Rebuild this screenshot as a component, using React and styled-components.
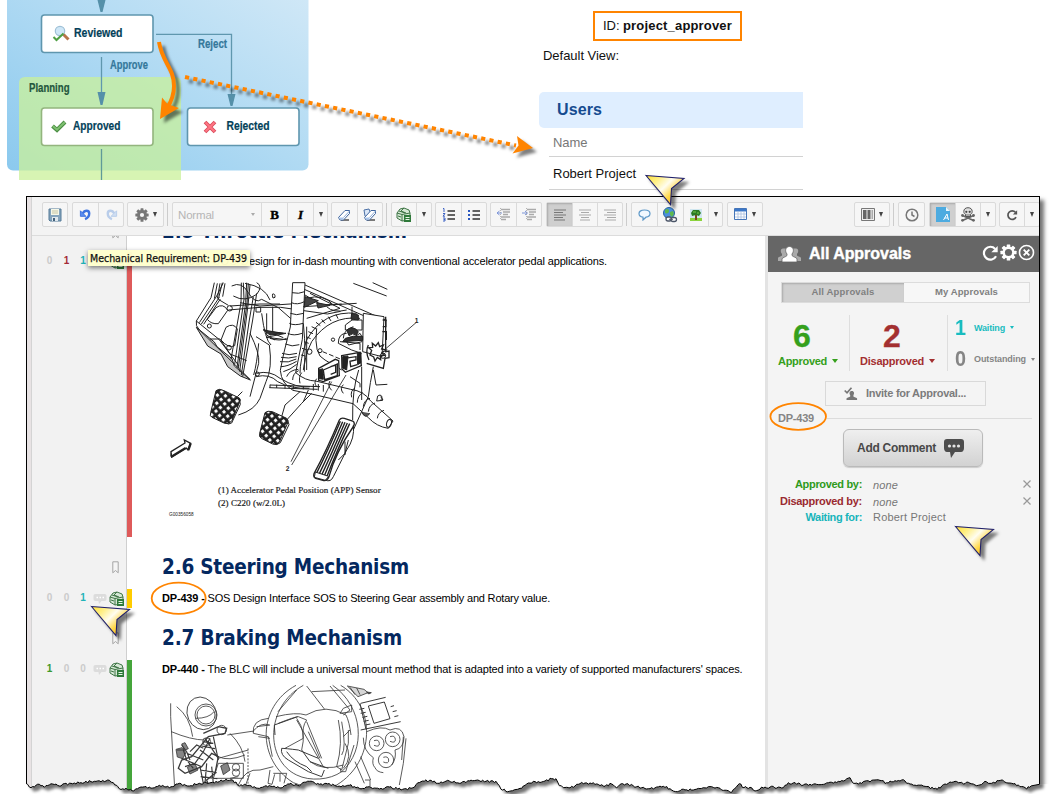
import React, { useLayoutEffect, useRef, useState } from 'react';
import styled, { createGlobalStyle, css } from 'styled-components';

const Global = createGlobalStyle`
  *, *::before, *::after { box-sizing: border-box; }
  html, body { margin: 0; background: #fff; overflow: hidden; }
  body { font-family: "Liberation Sans", Arial, sans-serif; color: #111; }
  svg { display: block; }
`;

const orange = '#ff8400';

/* Spreads a line of text over a given measure by adjusting its tracking. */
const FitSpan = styled.span`
  display: inline-block;
  white-space: pre;
`;
function Fit({ w, children }) {
  const ref = useRef(null);
  const [ls, setLs] = useState(0);
  useLayoutEffect(() => {
    const natural = ref.current.getBoundingClientRect().width;
    const n = ref.current.textContent.length;
    setLs((w - natural) / n);
  }, [w]);
  return <FitSpan ref={ref} style={{ letterSpacing: `${ls}px` }}>{children}</FitSpan>;
}

const Page = styled.div`
  position: relative;
  width: 1049px;
  height: 794px;
  overflow: hidden;
  background: #fff;
`;
const Top = styled.div`
  display: flex;
  height: 196px;
`;
const DiagramSvg = styled.svg`
  flex: 0 0 539px;
`;

/* ---- Users list ---- */
const UserPane = styled.div`
  width: 264px;
  padding-top: 11px;
  font-size: 13px;
`;
const IdBox = styled.div`
  width: 149px;
  height: 30px;
  margin-left: 54px;
  padding-left: 8px;
  border: 2px solid ${orange};
  line-height: 25px;
  color: #111;
`;
const ViewLabel = styled.div`
  padding-left: 4px;
  height: 51px;
  line-height: 29px;
  color: #111;
`;
const UsersTitle = styled.div`
  height: 36px;
  padding-left: 18px;
  border-radius: 5px 0 0 5px;
  background: #dfeeff;
  color: #154b90;
  font-size: 16px;
  font-weight: bold;
  line-height: 35px;
`;
const UserRow = styled.div`
  height: ${(p) => p.$h}px;
  margin-left: 10px;
  padding-left: 4px;
  border-bottom: 1px solid #d2d2d2;
  line-height: ${(p) => p.$lh}px;
  color: ${(p) => (p.$muted ? '#777' : '#111')};
`;

/* ---- Editor window ---- */
const Editor = styled.div`
  display: flex;
  width: 1014px;
  height: 598px;
  margin-left: 26px;
  border: 1px solid #000;
  border-bottom: 0;
  background: #f3f3f3;
  box-shadow: 4px 4px 4px rgba(0, 0, 0, 0.55);
`;
const Edge = styled.div`
  flex: 0 0 5px;
  background: #e8e3e4;
  border-right: 1px solid #d4d4d4;
`;
const Body = styled.div`
  width: 1007px;
  overflow: hidden;
`;
const Toolbar = styled.div`
  display: flex;
  height: 39px;
  padding: 5px 0 0 10px;
  border-bottom: 1px solid #dcdcdc;
  background: #f3f3f3;
`;
const Group = styled.div`
  display: flex;
  flex: none;
  height: 25px;
  margin-right: ${(p) => p.$mr ?? 4}px;
  border: 1px solid #dadada;
  border-radius: 2px;
  background: #f6f6f6;
`;
const Tool = styled.div`
  display: flex;
  align-items: center;
  justify-content: center;
  gap: 4px;
  width: ${(p) => p.$w}px;
  color: #4c4c4c;
  ${(p) => p.$on && css`background: #cfcfcf; box-shadow: inset 1px 1px 2px #aaa;`}
  & + & { border-left: 1px solid #dadada; }
`;
const Select = styled(Tool)`
  justify-content: space-between;
  padding: 0 6px 0 5px;
  font-size: 11.500px;
  color: #b5b5b5;
`;
const Letter = styled.span`
  font-family: "Liberation Serif", serif;
  font-size: 13px;
  font-weight: bold;
  font-style: ${(p) => (p.$italic ? 'italic' : 'normal')};
  color: #000;
  -webkit-text-stroke: 0.4px #000;
`;
const Sep = styled.div`
  flex: none;
  width: 1px;
  height: 23px;
  margin: 1px ${(p) => p.$mr}px 0 0;
  background: #ccc;
`;
const Spacer = styled.div`
  flex: 0 0 ${(p) => p.$w}px;
`;
const Caret = styled.i`
  width: 0;
  height: 0;
  border: ${(p) => p.$s ?? 2.5}px solid transparent;
  border-top: ${(p) => p.$t ?? 5}px solid ${(p) => p.$c ?? '#444'};
  border-bottom: 0;
`;
const Main = styled.div`
  display: flex;
  height: 558px;
`;

/* ---- Document ---- */
const Doc = styled.div`
  flex: 0 0 733px;
  background: #fff;
  overflow: hidden;
`;
const Row = styled.div`
  display: flex;
  height: ${(p) => p.$h}px;
`;
const Gutter = styled.div`
  display: flex;
  flex: 0 0 95px;
  align-items: flex-start;
  justify-content: flex-end;
  padding: ${(p) => p.$pt ?? 0}px ${(p) => p.$pr ?? 2}px 0 0;
  border-right: 1px solid #cfcfcf;
  background: #f2f2f2;
  overflow: hidden;
`;
const Bar = styled.div`
  flex: 0 0 5px;
  background: ${(p) => p.$c ?? '#fff'};
`;
const Content = styled.div`
  padding-left: 30px;
  white-space: nowrap;
  overflow: hidden;
  flex: 1;
`;
const Heading = styled.h2`
  margin: ${(p) => p.$mt}px 0 0;
  font: bold 20.500px/30px "DejaVu Sans Condensed", "DejaVu Sans", sans-serif;
  font-stretch: semi-condensed;
  color: #04285f;
`;
const Line = styled.div`
  height: 18px;
  font-size: 11px;
  line-height: 18px;
  color: #000;
`;
const Count = styled.span`
  flex: 0 0 ${(p) => p.$w ?? 17}px;
  text-align: center;
  font-size: 10px;
  font-weight: bold;
  line-height: 18px;
  color: ${(p) => p.$c ?? '#cbcbcb'};
`;
const Marks = styled.div`
  display: flex;
  height: 18px;
`;
const ScrolledMark = styled.div`
  margin-top: -10px;
`;
const Tip = styled.div`
  position: absolute;
  left: 88px;
  top: 250px;
  width: 162px;
  height: 16px;
  padding-left: 2px;
  background: rgba(255, 255, 204, 0.97);
  box-shadow: 0 2px 5px rgba(0, 0, 0, 0.5);
  font: 10.500px/16px "DejaVu Sans Condensed", "DejaVu Sans", sans-serif;
  font-stretch: semi-condensed;
  -webkit-text-stroke: 0.25px #111;
  color: #111;
`;

/* ---- Approvals panel ---- */
const Divider = styled.div`
  flex: 0 0 3px;
  background: #e3e3e3;
`;
const Panel = styled.div`
  width: 271px;
  background: #f4f4f4;
  color: #7a7a7a;
`;
const PanelHead = styled.div`
  display: flex;
  align-items: center;
  height: 36px;
  padding: 0 4px 0 9px;
  background: #666;
  color: #fff;
  font-size: 16px;
  font-weight: bold;
`;
const PanelTitle = styled.div`
  flex: 1;
  padding-left: 7px;
  -webkit-text-stroke: 0.4px #fff;
`;
const HeadIcons = styled.div`
  display: flex;
  gap: 1px;
  margin-top: -2px;
`;
const Tabs = styled.div`
  display: flex;
  width: 249px;
  height: 21px;
  margin: 10px 0 0 13px;
  border: 1px solid #dcdcdc;
`;
const Tab = styled.div`
  flex: ${(p) => (p.$on ? '0 0 122px' : '1')};
  text-align: center;
  font-size: 9.5px;
  font-weight: bold;
  line-height: 18px;
  color: #808080;
  background: ${(p) => (p.$on ? '#d0d0d0' : '#f7f7f7')};
  box-shadow: ${(p) => (p.$on ? 'inset 1px 1px 2px #aaa' : 'none')};
`;
const Stats = styled.div`
  display: flex;
  height: 56px;
  margin-top: 12px;
`;
const Stat = styled.div`
  width: ${(p) => p.$w}px;
  padding-left: ${(p) => p.$pl}px;
  border-right: 1px solid #dedede;
  color: ${(p) => p.$c};
  font-weight: bold;
`;
const Big = styled.div`
  padding-left: ${(p) => p.$pl}px;
  height: 42px;
  font-size: 32px;
  line-height: 42px;
  -webkit-text-stroke: 0.3px currentColor;
`;
const StatLabel = styled.div`
  display: flex;
  align-items: center;
  gap: 5px;
  margin-top: -5px;
  font-size: 11px;
  line-height: 18px;
`;
const Side = styled.div`
  padding-left: 7px;
`;
const SideRow = styled.div`
  display: flex;
  align-items: center;
  height: ${(p) => p.$h}px;
  color: ${(p) => p.$c};
  font-size: 9px;
  font-weight: bold;
  gap: 5px;
`;
const SideNum = styled.span`
  width: 14px;
  font-size: 22px;
  line-height: 24px;
  transform: scaleX(0.9);
  transform-origin: left;
`;
const Invite = styled.div`
  display: flex;
  align-items: center;
  width: 161px;
  height: 25px;
  margin: 10px 0 0 57px;
  padding-left: 18px;
  gap: 8px;
  border: 1px solid #d9d9d9;
  font-size: 11px;
  font-weight: bold;
  line-height: 29px;
  color: #7c7c7c;
`;
const ItemLine = styled.div`
  display: flex;
  align-items: center;
  height: 23px;
  padding: 1px 7px 0 10px;
  gap: 13px;
  font-size: 11px;
  font-weight: bold;
  color: #858585;
  &::after { content: ""; flex: 1; height: 1px; background: #dcdcdc; }
`;
const AddButton = styled.div`
  display: flex;
  align-items: center;
  width: 140px;
  height: 38px;
  margin-left: 75px;
  padding-left: 13px;
  gap: 8px;
  border: 1px solid #bababa;
  border-radius: 6px;
  background: linear-gradient(#efefef, #d2d2d2);
  box-shadow: 0 1px 1px #ccc;
  font-size: 12px;
  font-weight: bold;
  color: #484848;
`;
const People = styled.div`
  padding-top: 9px;
`;
const Person = styled.div`
  display: flex;
  height: 16.7px;
  font-size: 11px;
  line-height: 17px;
`;
const PersonLabel = styled.div`
  width: 94px;
  text-align: right;
  font-weight: bold;
  color: ${(p) => p.$c};
`;
const PersonValue = styled.div`
  flex: 1;
  padding-left: 11px;
  padding-top: ${(p) => (p.$none ? 1 : 0)}px;
  font-style: ${(p) => (p.$none ? 'italic' : 'normal')};
  color: #777;
`;
const RemoveIcon = styled.svg`
  margin: 4px 8px 0 0;
`;
const Overlay = styled.svg`
  position: absolute;
  left: 0;
  top: 0;
  pointer-events: none;
`;

/* ---- Icons ---- */
const SaveIcon = () => (
  <svg width="14" height="14" viewBox="0 0 14 14"><path d="M1 1h12v12H2l-1-1z" fill="#86a5bd" stroke="#557b98" /><path d="M3 1h8v6H3z" fill="#f5f7e8" /><path d="M4 3h6M4 5h6" stroke="#c7c5a4" /><path d="M4 9h6v4H4z" fill="#dfe8ee" /><path d="M5 10h2v3H5z" fill="#43617a" /></svg>
);
const UndoIcon = ({ faded }) => (
  <svg width="13" height="13" viewBox="0 0 14 14"><g transform={faded ? 'translate(14 0) scale(-1 1)' : undefined} stroke={faded ? '#b9cdea' : '#3c73e0'} fill="none"><path d="M4 6C6 2 11 2 11 6c0 3-2 5-4.500 6" strokeWidth="2.600" /><path d="M1.500 3v6h6z" fill={faded ? '#cfdef2' : '#5a8df0'} strokeWidth="1" /></g></svg>
);
const GearIcon = ({ s = 14, c = '#777', hole = '#f6f6f6', r = 2.4 }) => (
  <svg width={s} height={s} viewBox="-8 -8 16 16"><g fill={c}>{[0, 45, 90, 135].map((a) => <rect key={a} x="-1.700" y="-7.600" width="3.400" height="15.200" rx=".6" transform={`rotate(${a})`} />)}<circle r="5.600" /></g><circle r={r} fill={hole} /></svg>
);
const EraserIcon = ({ all }) => (
  <svg width="15" height="14" viewBox="0 0 15 14"><path d="M4 12h8" stroke="#333" strokeWidth="1.300" />{all && <path d="M1 2l5-1 2 5-4 4-2-2z" fill="#dbe7f7" stroke="#4a6fa5" />}<path d="M1.500 9.500L8 2.500h4.500v3L6.500 12H3z" fill="#fff" stroke="#40669f" /><path d="M2 9.500h4.500v2H3z" fill="#a9c5ec" /><path d="M6.500 9.500l6-6.500" stroke="#8eacd6" /></svg>
);
const StampShape = () => (
  <>
    <path d="M1 6L4 2l4-1 5 2 1 3v7l-8 1-5-3z" fill="#d5e8d5" stroke="#3f7546" />
    <path d="M1 6l5 1.500L14 6M6 7.500V14M3 4l6 2M8 1L5 4l5 2M2 9l3 1" stroke="#3f7546" fill="none" />
    <path d="M8 8h7v7H8z" fill="#2f7a3a" />
    <path d="M9.500 10.500h4M9.500 12.500h4" stroke="#e8f6e8" />
  </>
);
const StampIcon = () => <svg width="16" height="16" viewBox="0 0 16 16"><StampShape /></svg>;
const ListIcon = ({ numbered }) => (
  <svg width="14" height="14" viewBox="0 0 14 14"><path d="M5.500 3H13M5.500 7H13M5.500 11H13" stroke="#333" strokeWidth="1.300" />{numbered ? <path d="M1 .500h1V4M1 5.500h2L1 8.200h2M1 10h2v3H1M3 11.500H1.500" stroke="#3c62c4" fill="none" /> : <path d="M1 2h2v2H1zM1 6h2v2H1zM1 10h2v2H1z" fill="#2a57c0" />}</svg>
);
const IndentIcon = ({ out }) => (
  <svg width="15" height="13" viewBox="0 0 15 13"><path d="M5 1.500h9M7 4h7M7 6.500h5M5 9h9M5 11.500h5" stroke="#aaa" strokeWidth="1.300" /><path d={out ? 'M6 5H1m2.500-2L1 5l2.500 2' : 'M0 5h5M3 3l2.500 2L3 7'} stroke="#7d95d9" fill="none" /><path d="M4.500 0v12" stroke="#999" strokeDasharray="1 1" strokeWidth=".7" /></svg>
);
const AlignIcon = ({ d, c = '#aaa' }) => (
  <svg width="14" height="12" viewBox="0 0 14 12"><path d={d} stroke={c} strokeWidth="1.200" /></svg>
);
const BubbleIcon = () => (
  <svg width="13" height="12" viewBox="0 0 13 12"><path d="M6.500 1c3 0 5.500 1.300 5.500 3.600S10 8 8 8.200L5 11V8.200C3 8 1 7 1 4.600S3.500 1 6.500 1z" fill="#f0f8ff" stroke="#5d98c8" strokeWidth="1.200" /></svg>
);
const GlobeIcon = () => (
  <svg width="15" height="16" viewBox="0 0 15 16"><circle cx="6" cy="6" r="5.500" fill="#4b8fdd" stroke="#27649f" /><path d="M2 3c3-2 4-1 4 1S4 7 2 6zM7 5l3-1 1 3-2 3-2-2z" fill="#5eb84d" /><g fill="#fff" stroke="#4b5568" strokeWidth="1.300"><rect x="3" y="10" width="5.500" height="4" rx="2" /><rect x="8" y="10.500" width="5.500" height="4" rx="2" /></g><path d="M6 12.300h4" stroke="#4b5568" /></svg>
);
const TreeIcon = () => (
  <svg width="12" height="12" viewBox="0 0 12 12"><path d="M0 0h12v12H0z" fill="#cfe6ef" /><path d="M0 9h12v3H0z" fill="#8bd33d" /><path d="M5 5h2v6H5z" fill="#7a4a1d" /><path d="M1 4l2-3h6l2 3-2 3-3-1-4 1z" fill="#2c7a24" /><path d="M3 3h3M7 4h2" stroke="#76c94b" /></svg>
);
const TableIcon = () => (
  <svg width="14" height="13" viewBox="0 0 14 13"><path d="M.5.500h12v11H.500z" fill="#fff" stroke="#4575b8" /><path d="M1 1h11v2.500H1z" fill="#3c78c9" /><path d="M4 3v8M7 3v8M10 3v8M1 6h11M1 9h11" stroke="#a7bede" strokeWidth=".8" /></svg>
);
const ColumnsIcon = () => (
  <svg width="14" height="13" viewBox="0 0 14 13"><path d="M.5.500h13v12H.500z" fill="#eee" stroke="#777" /><path d="M2 2h3.500v9H2zM6.500 2h3v9h-3z" fill="#666" /><path d="M10.500 2H12v9h-1.500z" fill="#aaa" /></svg>
);
const ClockIcon = () => (
  <svg width="14" height="14" viewBox="0 0 14 14" fill="none" stroke="#777" strokeWidth="1.500"><circle cx="7" cy="7" r="5.800" /><path d="M7 3.500V7l2.500 1.500" /></svg>
);
const PageAIcon = () => (
  <svg width="14" height="15" viewBox="0 0 14 15"><path d="M0 0h10l4 4v11H0z" fill="#4dabe0" /><path d="M10 0l4 4h-4z" fill="#e8f5fc" /><path d="M7.500 13L11 7l1.500 6M8.500 11h3.500" stroke="#fff" fill="none" /></svg>
);
const SkullIcon = () => (
  <svg width="14" height="15" viewBox="0 0 14 15"><path d="M1.500 8.500l11 5M12.500 8.500l-11 5" stroke="#666" strokeWidth="1.700" /><g fill="#666"><circle cx="1.500" cy="8.500" r="1.400" /><circle cx="12.500" cy="8.500" r="1.400" /><circle cx="1.500" cy="13.300" r="1.400" /><circle cx="12.500" cy="13.300" r="1.400" /></g><path d="M7 .7c2.600 0 4.200 1.500 4.200 3.800 0 1.700-.7 2.300-1.700 2.800V9.500h-5V7.300c-1-.5-1.700-1.100-1.700-2.800C2.800 2.200 4.400.7 7 .7z" fill="#ddd" stroke="#555" /><circle cx="5.300" cy="4.800" r="1.100" fill="#444" /><circle cx="8.700" cy="4.800" r="1.100" fill="#444" /><path d="M6 7v2M8 7v2" stroke="#555" strokeWidth=".8" /></svg>
);
const ReloadIcon = ({ s = 12, c = '#555', w = 2 }) => (
  <svg width={s} height={s} viewBox="0 0 14 14"><path d="M11 3.800A5 5 0 1 0 11.700 9.500" fill="none" stroke={c} strokeWidth={w} /><path d="M13 1.500v5H8z" fill={c} /></svg>
);
const CloseIcon = () => (
  <svg width="17" height="17" viewBox="0 0 17 17" fill="none" stroke="#fff" strokeWidth="1.600"><circle cx="8.500" cy="8.500" r="7" /><path d="M5.700 5.700l5.600 5.600M11.300 5.700l-5.600 5.600" strokeWidth="1.900" /></svg>
);
const GroupIcon = () => (
  <svg width="25" height="17" viewBox="0 0 25 17"><path d="M1 15v-3c0-1 3-1.500 4-2.500V8C3 6 3.500 2.500 6 2.500h13c2.500 0 3 3.500 1 5.500v1.500c1 1 4 1.500 4 2.500v3z" fill="#aaa" /><path d="M5 16v-3c0-1.500 4-2 5-3.500V8C7.500 5 8.500 .500 12.500.500S17.500 5 15 8v1.500c1 1.500 5 2 5 3.500v3z" fill="#fff" stroke="#666" strokeWidth=".8" /></svg>
);
const InviteIcon = () => (
  <svg width="14" height="14" viewBox="0 0 14 14"><path d="M.7 3.500l2.300 2.300L7.500.7" fill="none" stroke="#777" strokeWidth="1.700" /><path d="M2.500 13v-1.500c0-1 3-1 3.700-2V8.300C5 6.500 5.300 4 7.800 4s2.800 2.500 1.600 4.300v1.200c.7 1 3.700 1 3.700 2V13z" fill="#777" /></svg>
);
const CommentIcon = ({ w = 20, c = '#4d4d4d', dot = '#e4e4e4' }) => (
  <svg width={w} height={w} viewBox="0 0 20 20"><path d="M3 1h14c2 0 3 1 3 3v6c0 2-1 4-3 4h-6l-4 6-1-6H3c-2 0-3-2-3-4V4c0-2 1-3 3-3z" fill={c} /><g fill={dot}><circle cx="5.500" cy="8" r="1.600" /><circle cx="10" cy="8" r="1.600" /><circle cx="14.500" cy="8" r="1.600" /></g></svg>
);
const SpeechIcon = () => (
  <svg width="18" height="18" viewBox="0 0 18 18"><g transform="translate(2.500 5)"><path d="M2 0h9c1.500 0 2 .7 2 2v3c0 1.300-.7 2-2 2H8l-2.500 3L5 7H2C.7 7 0 6.300 0 5V2C0 .7.700 0 2 0z" fill="#dcdcdc" /><path d="M3 3.500h1.500M6 3.500h1.500M9 3.500h1.500" stroke="#fff" strokeWidth="1.500" /></g></svg>
);
const Bookmark = () => (
  <svg width="7" height="13" viewBox="0 0 7 13"><path d="M.8.800h5.400v11L3.500 9.500.8 11.800z" fill="#f5f5f5" stroke="#a6a6a6" /></svg>
);

function Counters({ values, colors = [] }) {
  return (
    <Gutter $pr={1}>
      {values.map((v, i) => <Count key={i} $c={colors[i]} $w={i === 2 ? 16 : 17}>{v}</Count>)}
      <Marks>
        <SpeechIcon />
        <svg width="16" height="18" viewBox="0 -2 16 18"><StampShape /></svg>
      </Marks>
    </Gutter>
  );
}

/* ---- Workflow diagram ---- */
const NodeText = ({ x, y, w, c = '#033f59', children }) => (
  <text x={x} y={y} textLength={w} lengthAdjust="spacingAndGlyphs" fontSize="12" fontWeight="bold" fill={c} stroke={c} strokeWidth=".2">{children}</text>
);
function Workflow() {
  return (
    <DiagramSvg width="539" height="196" fontFamily="Liberation Sans, Arial, sans-serif">
      <defs>
        <linearGradient id="sky" x1="0" y1="1" x2="1" y2="0"><stop offset="0" stopColor="#8bc9ee" /><stop offset=".5" stopColor="#b0daf3" /><stop offset="1" stopColor="#d3e9f7" /></linearGradient>
      </defs>
      <rect x="7" y="-20" width="301.500" height="190.500" rx="6" fill="url(#sky)" />
      <path d="M19 180V83q0-6 6-6h150q6 0 6 6v97z" fill="#c9f09a" fillOpacity=".75" />
      <g stroke="#5f97ae" fill="none" strokeWidth="1.300">
        <path d="M101.500 0v4M101.500 57v36M156 34.300h75.500V96" />
        <path d="M101.500 149v31" stroke="#5f9a98" />
      </g>
      <path d="M97.500 0h8l-3 12h-2zM97.500 92h8l-3 13h-2zM227.500 94h8l-3 12h-2z" fill="#5590a9" />
      <rect x="41.500" y="15" width="111.500" height="37.500" rx="3" fill="#fff" stroke="#5f96ae" strokeWidth="1.600" />
      <rect x="41.500" y="108" width="111.500" height="37.500" rx="3" fill="#fff" stroke="#93b57e" strokeWidth="1.600" />
      <rect x="187.500" y="108" width="111.500" height="37.500" rx="3" fill="#fff" stroke="#5f96ae" strokeWidth="1.600" />
      <circle cx="60" cy="31" r="4.700" fill="#cfe7f7" stroke="#9fc0d6" strokeWidth="1.200" />
      <path d="M63.500 34.500l5 5" stroke="#b87449" strokeWidth="3" />
      <path d="M53.500 37l3 3 7-6.500" stroke="#4f9f43" strokeWidth="2" fill="none" />
      <path d="M52.500 126l4.500 4 8-8" stroke="#4b8e43" strokeWidth="4" fill="none" />
      <path d="M52.800 126l4.200 3.700 7.700-7.500" stroke="#7fc071" strokeWidth="2" fill="none" />
      <path d="M205 122l10 10M215 122l-10 10" stroke="#d94c5c" strokeWidth="3.800" />
      <path d="M205.500 122.500l9 9M214.500 122.500l-9 9" stroke="#ff7684" strokeWidth="1.800" />
      <NodeText x={74} y={37} w={48.500}>Reviewed</NodeText>
      <NodeText x={73} y={130} w={47.500}>Approved</NodeText>
      <NodeText x={226.500} y={130} w={43}>Rejected</NodeText>
      <NodeText x={110} y={69} w={38} c="#34779a">Approve</NodeText>
      <NodeText x={198} y={48} w={29} c="#34779a">Reject</NodeText>
      <NodeText x={29} y={92} w={40.500} c="#23563d">Planning</NodeText>
    </DiagramSvg>
  );
}

/* ---- Technical drawings ---- */
function PedalDrawing() {
  return (
    <svg width="268" height="260" viewBox="6 0 804 780" fill="none" stroke="#222" strokeWidth="3">
      <defs>
        <pattern id="tread" width="17" height="17" patternUnits="userSpaceOnUse" patternTransform="rotate(50)"><rect width="17" height="17" fill="#1a1a1a" /><rect x="3" y="3" width="9" height="9" fill="#fff" stroke="none" /></pattern>
      </defs>
      <path d="M163 38l-10 45-44 70q-4 14 10 28l152 148M109 153l68 55 60 80M187 38l-12 50 30 18M131 163l50-76M118 158l52-80 20-40M124 162l54-80 M150 207l30 0 30 45 50 20M142 148l26-35q22-15 35 8l-28 40q-22 2-33-13zM183 210l15-38q22-15 34 5l-8 50q-18 10-41-17z" />
      <path d="M250 38l2 50-28 195M260 38l-3 60-26 195M265 40l-4 60-26 195M270 45l-6 60-25 200M280 80l-12 70-24 165M290 70l-12 80-30 170M244 38l-1 60-30 170M172 40l-9 46M180 40l-8 46M195 40l-7 40" />
      <path d="M109 172l54 44 8 14 45 36 7 22 48 42-30-12-38-28-20-38-40-24z" fill="#444" fillOpacity=".3" />
      <circle cx="148" cy="168" r="6" /><circle cx="207" cy="233" r="7" /><circle cx="209" cy="115" r="8" />
      <path d="M215 48q30-15 50 20t40 20l50 25 40 35M255 40q60 10 75 50M220 78q35 20 70-5 20-25 0-35M288 112h14v14h-14zM205 120l95-8 62 0 140 20 40-8M240 98l60 10 150-10M210 108l90-6 60 0" />
      <path d="M288 200l40 25q10 70-10 110l-18 50q-15 35-65 50M305 130q10 80 28 95M270 190q30 60 26 90l-26 100M296 220q-5 60-15 95" />
      <path d="M320 130v65l25 15M338 110v80M310 178l60 25M318 185l60 5-60 12 70 8M330 205q30 10 50 0" />
      <path d="M310 180l60 10-40 5z" fill="#333" />
      <path d="M398 38h37l-8 170-20 100q30 25 60 25l105 25q40 5 60 35l67 60-14 22q-35-5-60-32l-46-42-120-28-60-12q-35-20-38-60l10-50 20-80z" fill="#fff" />
      <path d="M396 68q20 5 38-3M394 98q18 8 39-3M391 130q18 8 40 0M388 160q15 8 41 0M383 190q18 9 43 0M376 222q20 10 42 2M366 250q20 8 45 0M363 262q22 5 47-2M360 275q25 5 49-8M362 290q20 0 48-16M370 305q20-5 40-22M380 320q8-20 35-22M398 330q0-20 18-28M420 340q-5-20 5-32M470 350q-10-12 0-24M515 361q-14-14-5-28M550 370q-12-14 0-26M575 382q-5-20 10-28M592 398q0-20 16-30M610 410q2-20 20-25M625 425q2-20 20-26M652 445q2-18 20-24" />
      <ellipse cx="687" cy="460" rx="7" ry="12" transform="rotate(15 687 460)" />
      <path d="M435 45l245 107M433 58l180 80M435 75l50 30 60-3M440 85q50-15 80 20M430 110l160-10M450 70l90 45-100 30M580 40l100 38M638 38l44 20M590 130q-100-10-150 80-20 60-20 100M600 145q-90-10-145 70-25 50-22 90M470 175q-10 80 25 95l50 30M430 160q10 100 0 140M440 170v130M500 110q20 20 60 10" />
      <path d="M435 80l40 12-42 20zM470 98l40 8-36 8z" fill="#444" />
      <path d="M432 215l14 5M438 200l14 6M445 185l14 6M455 170l14 7M468 157l13 10M485 148l10 12M505 140l8 13M528 133l6 13M426 235l13 4M423 255l13 3" />
      <path d="M610 130l62 10-6 120-58-15zM576 110v40h30v30h-50v-15l20-15M560 190q-25 0-25 30l40 20 30 10M580 170q-30 10-30 35M560 215l40-25q10 10 6 25l-40 10zM540 215l60 5v20" fill="#fff" />
      <path d="M560 180q20-15 35 5l-6 10q-12-8-22 2zM575 130l20 5v15l-22-3zM556 205q25-10 52-6v12l-60 4z" fill="#333" />
      <path d="M630 255l5-14-9-8 12-1-1-12 10 8 8-10 4 12 11-5-5 12 13 3-12 7 8 9-13 1 1 12-10-7-7 11-4-12z" strokeWidth="4" />
      <path d="M625 225q-10 20 2 45M620 280l50 15 5-30 12-2v-20l-10 2V140M668 150h10v20h-10M667 185h12v25" strokeWidth="4" />
      <circle cx="669" cy="257" r="8" /><circle cx="519" cy="209" r="5" /><circle cx="480" cy="242" r="6" /><circle cx="448" cy="245" r="8" />
      <path d="M488 245l60 25" strokeDasharray="14 7" />
      <path d="M545 257l55-10 4 40-48 20-10-10zM553 265l35-5v10l-18 4 2 16 20-6M476 295l50-27 10 4 2 45-48 18-14-4zM490 300l42-18v35l-38 12zM512 290l15-5v22l-15 6M478 310l14 5" fill="#fff" strokeWidth="4" />
      <path d="M548 260l16-2-4 42-12-6zM476 300l12-4 2 32-12-2zM592 250l11-2v30l-10 6z" fill="#222" />
      <path d="M768 158L675 238M515 335L393 575M558 315L395 585" strokeWidth="2.500" />
      <path d="M596 300q-20 60-18 150M640 290q-10 50-15 90l-45 100M605 290v100M640 300l8 45 34-2M570 320l30 20 0 12" />
      <path d="M290 310q40-10 70 15 50 30 90 25M288 320q40-10 65 15 40 22 95 20M330 345l150 5M328 353l145 5M330 344v10M350 344v10M375 346v10M400 348v10M430 348v10M460 342v20M475 342v20M490 345v20" />
      <circle cx="292" cy="312" r="6" />
      <path d="M420 365l-45 40-10 35M455 370l-30 30-45 50M445 360l-15 35M232 380l15-15M215 405l15-22" />
      <path d="M168 362q10-8 24 0l46 22q6 5 0 14l-22 54q-8 12-22 8l-38-18q-8-4-4-14z" fill="url(#tread)" />
      <path d="M238 385l3 18-26 56q-10 6-18 0" />
      <path d="M315 428q7-7 22-3l43 20q6 6 3 14l-25 58q-8 9-20 5l-34-17q-8-5-5-15z" fill="url(#tread)" />
      <path d="M382 448l5 16-26 54q-10 10-22 3" />
      <path d="M538 450q5-8 15-5l25 8q8 5 3 15-55 80-74 152-7 15-18 11l-22-6q-8-4-5-14 38-70 76-161z" fill="#fff" strokeWidth="4" />
      <path d="M541 454q-38 90-72 157M548 455q-38 90-71 158M555 457q-38 90-70 158M562 459q-40 90-69 158M569 461q-42 90-68 158" strokeWidth="4.200" />
      <path d="M466 606l40 13-10 12-33-9z" fill="#fff" />
      <path d="M580 465q5 40-20 75l-40 80q-8 18-24 10M565 510l-10 40-20 20M555 515v40" />
      <path d="M605 425q10 25 25 5" fill="#555" />
      <path d="M650 393l3-15q8-6 12 0l2 13zM662 380l7 10h-8M338 72q8-2 7 10l-6 2q-3-7-1-12z" />
      <path d="M33 545l42-26-2-9 19 10-8 20-5-6-44 27zM33 545v14" strokeWidth="4" fill="#fff" />
      <path d="M33 561l44-27M92 520l-7 20" strokeWidth="7" />
      <g fill="#222" stroke="none" fontFamily="Liberation Serif, serif">
        <text x="174" y="670" fontSize="27" textLength="488" stroke="#222" strokeWidth=".6">(1) Accelerator Pedal Position (APP) Sensor</text>
        <text x="174" y="707" fontSize="27" textLength="201" stroke="#222" strokeWidth=".6">(2) C220 (w/2.0L)</text>
        <text x="764" y="158" fontSize="20" fontFamily="Liberation Sans" fontWeight="bold">1</text>
        <text x="377" y="602" fontSize="20" fontFamily="Liberation Sans" fontWeight="bold">2</text>
        <text x="27" y="738" fontSize="14" textLength="74" fontFamily="Liberation Sans">G00356058</text>
      </g>
    </svg>
  );
}

function WheelDrawing() {
  return (
    <svg width="268" height="116" viewBox="36 24 804 348" fill="none" stroke="#3a3a3a" strokeWidth="2.500">
      <path d="M62 100v40l12 215M80 110q40 30 48 90M64 185q60 25 100 25M232 195l80-12" />
      <ellipse cx="155" cy="130" rx="43" ry="50" transform="rotate(-25 155 130)" />
      <circle cx="168" cy="135" r="33" /><circle cx="168" cy="135" r="27" /><path d="M137 145q40 0 55-20" />
      <path d="M160 190l45-20 25 5-5 15-50 10-25 30-25 30-30 10-10 25 20 15 50-20 30-40 20 10-10 50-25 20 10 30" strokeWidth="4" />
      <path d="M80 240l20 0 10 30 20 25M95 225l15 20 10 25M105 290l30-10 25-35 20-40M150 240l40 30M165 205l40 60M190 200l15 70M150 290l10 50M170 280l-5 60M185 290l5 50M95 265l60 25M110 250l50 20M120 245l20-20 20 10M150 300l50 8M152 320l50 6M160 215l30 5M155 228l40 8" strokeWidth="3.500" />
      <path d="M78 238l18-5 12 15-10 18-16-5zM95 222l10-4 10 18-12 5zM112 292l22-12 10 20-24 12zM212 288l20-10 8 22-20 14z" fill="#333" fillOpacity=".6" />
      <circle cx="215" cy="180" r="14" /><circle cx="258" cy="292" r="11" /><circle cx="258" cy="308" r="11" /><circle cx="170" cy="215" r="12" />
      <path d="M205 280h75v45h-90zM240 325l25-5M205 265l90-25" /><path d="M294 235v115" strokeDasharray="6 4" /><path d="M240 190q40 40 45 85M205 260q30 15 80-5" />
      <path d="M310 190q-5-40 45-45M308 185q25-30 50-20M310 190l45 10 12 60M325 200l35 5M320 170l40-5M265 345q20-50 65-45l40-10M285 350l15-40M360 300l-6 40 12 3 8-30M370 310h40l-8 30M390 310v25" />
      <path d="M378 140q60-15 90-5 60-35 120 0 10 20 15 60M385 160q50-20 60-20l25 10q-15 20-10 55l-55 30M440 145q30 40 15 95" />
      <path d="M375 195l-2-30 70-25M395 235q10 0 50 5l60 25M395 235q-5 20 20 35l60 35 40 15 8-20M410 245q20 30 60 45l15 15M455 240l25 35 55 20" strokeWidth="3" />
      <path d="M440 60l-56 65M470 48l54 70M540 48l60 72-20 15M485 65l100-5" />
      <path d="M440 150l80 140M470 155l45 110M475 185l35 80M480 275q40 30 100 10M565 150q15 70-5 140l15 10 20-80 0-40M575 155q15 80 0 100M585 220q25 40-5 75M580 200l20-20M572 295v10h15l25-80" />
      <path d="M570 130l35-5v-20l-25 10z" />
      <path d="M438 46C320 110 320 270 430 338M425 52M572 46C680 110 675 275 560 345M430 338C470 355 530 355 560 345M460 46C345 110 345 270 440 315C480 335 540 330 575 305C650 240 640 110 548 46" />
      <path d="M592 48l50 10 12 10-30 12zM600 52l15 22M620 54l10 20" fill="#777" fillOpacity=".3" />
      <path d="M650 66l14 2-8 4z" fill="#333" />
      <path d="M632 100l75-18M655 108l48-12 17 50-48 14zM628 118l15-3M632 130l15-3M637 142l15-3M641 154l15-3M646 165l15-3M722 110l10-3M728 125l12-3M733 140l12-3M632 180l120-25M630 100l18 78" strokeWidth="3" />
      <path d="M650 185q45-20 70-5 35-15 42 20 0 35-27 40 5 25-10 45M700 308q-20-2-25-15-10-10-5-30-30-20-30-60" />
      <circle cx="680" cy="220" r="22" /><circle cx="728" cy="208" r="22" /><circle cx="708" cy="270" r="23" />
      <path d="M672 212q15-5 16 8t-16 6M720 200q15-5 16 8t-16 6M700 262q15-5 16 8t-16 6" />
      <path d="M615 275l28 65M632 260l30 70M645 330h15v20M768 205l-8 75-12 65M760 200l-5 70" />
    </svg>
  );
}

/* ---- Torn lower edge ---- */
const tearLeft = [0,130,15,143,40,133,55,142,80,132,100,138,130,130,165,128,205,124,250,121,262,128,280,146,300,145,318,152,345,141,380,144,400,136,430,143,455,132,490,138,520,130,560,127,600,118,620,120,640,138,660,135,690,144,720,137,760,143,790,132,815,136,850,124,880,133,900,130,930,138,970,136,1000,145,1030,140,1060,147,1090,141,1130,148,1155,145,1185,125,1215,121,1240,130,1270,123,1300,130,1340,122,1380,124,1410,124,1425,148,1450,154,1475,148];
const tearRight = [0,145,20,132,40,124,65,126,95,116,108,116,118,137,130,143,165,138,180,131,210,129,250,138,275,132,290,143,308,131,350,140,390,146,430,139,450,146,472,155,485,148,520,150,575,140,600,145,635,157,658,131,672,143,690,142,705,153,725,141,790,143,805,128,850,135,900,134,960,125,990,113,1000,130,1020,128,1065,120,1100,128,1145,120,1170,132,1210,138,1252,148,1265,138,1300,126,1350,130,1375,136,1395,124,1415,130,1442,121,1475,130,1500,140,1520,147,1538,133];
const toPoints = (a, x0) => a.reduce((out, v, i) => (i % 2 ? out : [...out, [x0 + v / 3, 740 + a[i + 1] / 3]]), []);
const tear = [...toPoints(tearLeft, 26), ...toPoints(tearRight, 520)];
const noise = (n) => {
  const v = Math.sin(n * 127.1) * 43758.5453;
  return v - Math.floor(v) - 0.5;
};
const rough = [];
for (let i = 0; i < tear.length - 1; i += 1) {
  const [ax, ay] = tear[i];
  const [bx, by] = tear[i + 1];
  const n = Math.max(1, Math.round((bx - ax) / 1.7));
  for (let k = 0; k < n; k += 1) {
    const t = k / n;
    const j = k === 0 ? 0 : noise(i * 31 + k) * 2.4;
    rough.push(`${(ax + (bx - ax) * t).toFixed(1)},${(ay + (by - ay) * t + j).toFixed(1)}`);
  }
}
rough.push('1039.5,784.3');
const tearLine = rough.join(' L');

const Cursor = ({ x, y }) => (
  <path transform={`translate(${x} ${y})`} d="M0 0l38 3-12.500 10L24.500 29z" fill="url(#gold)" stroke="#20206a" strokeWidth="1.100" filter="url(#drop)" />
);

function Annotations() {
  return (
    <Overlay width="1049" height="794">
      <defs>
        <linearGradient id="gold" x1="0" y1="0" x2=".9" y2=".7"><stop offset="0" stopColor="#ffe030" /><stop offset=".3" stopColor="#fff08a" /><stop offset=".55" stopColor="#fffdf0" /><stop offset=".8" stopColor="#ffd84a" /><stop offset="1" stopColor="#ffc020" /></linearGradient>
        <filter id="drop" x="-30%" y="-30%" width="180%" height="180%" colorInterpolationFilters="sRGB"><feDropShadow dx="4" dy="4" stdDeviation="1.800" floodColor="#000" floodOpacity=".5" /></filter>
        <filter id="soft"><feGaussianBlur stdDeviation="1.800" /></filter>
        <clipPath id="below"><path d={`M0,784 L26,784 L${tearLine} L1049,784 L1049,794 L0,794z`} /></clipPath>
      </defs>
      <g clipPath="url(#below)">
        <rect y="770" width="1049" height="24" fill="#fff" />
        <path transform="translate(4 4)" d={`M26,700 L${tearLine} L1039.500,700z`} fill="#000" fillOpacity=".55" filter="url(#soft)" />
      </g>
      <path d={`M${tearLine}`} fill="none" stroke="#000" strokeWidth="1" />
      <g filter="url(#drop)">
        <path d="M159 42C162 62 174 68 174 86C174 96 171 102 167 108" fill="none" stroke={orange} strokeWidth="4" />
        <path d="M160 119l2-21.500 5.500 6.500 11.500 4z" fill={orange} />
        <path d="M185 77L516 145.500" stroke={orange} strokeWidth="4" strokeDasharray="4.200 4.200" />
        <path d="M533 148L517 136l1.500 9.500-6 8z" fill={orange} />
      </g>
      <g fill="none" stroke={orange} strokeWidth="1.800">
        <ellipse cx="178.700" cy="598.200" rx="27" ry="15.600" />
        <ellipse cx="798.200" cy="416.500" rx="27.800" ry="13.300" />
      </g>
      <Cursor x={646} y={175.500} />
      <Cursor x={955.500} y={526.500} />
      <Cursor x={91.500} y={606.500} />
    </Overlay>
  );
}

const Remove = () => (
  <RemoveIcon width="8" height="8" viewBox="0 0 8 8"><path d="M.5.500l7 7M7.500.500l-7 7" stroke="#999" strokeWidth="1.200" /></RemoveIcon>
);

export default function App() {
  return (
    <Page>
      <Global />
      <Top>
        <Workflow />
        <UserPane>
          <IdBox><Fit w={20}>ID: </Fit><b><Fit w={109}>project_approver</Fit></b></IdBox>
          <ViewLabel><Fit w={76}>Default View:</Fit></ViewLabel>
          <UsersTitle><Fit w={45}>Users</Fit></UsersTitle>
          <UserRow $h={29} $lh={29} $muted><Fit w={34.5}>Name</Fit></UserRow>
          <UserRow $h={33} $lh={34}><Fit w={83}>Robert Project</Fit></UserRow>
        </UserPane>
      </Top>
      <Editor>
        <Edge />
        <Body>
          <Toolbar>
            <Group><Tool $w={24}><SaveIcon /></Tool></Group>
            <Group $mr={3}><Tool $w={25}><UndoIcon /></Tool><Tool $w={25}><UndoIcon faded /></Tool></Group>
            <Group $mr={3}><Tool $w={35}><GearIcon /><Caret /></Tool></Group>
            <Sep $mr={4} />
            <Group $mr={3}><Select $w={88}><Fit w={36}>Normal</Fit><Caret $s={2} $t={3} $c="#aaa" /></Select><Tool $w={26}><Letter>B</Letter></Tool><Tool $w={26}><Letter $italic>I</Letter></Tool><Tool $w={14}><Caret /></Tool></Group>
            <Group $mr={3}><Tool $w={25}><EraserIcon /></Tool><Tool $w={25}><EraserIcon all /></Tool></Group>
            <Sep $mr={4} />
            <Group $mr={3}><Tool $w={24}><StampIcon /></Tool><Tool $w={15}><Caret /></Tool></Group>
            <Group $mr={3}><Tool $w={25}><ListIcon numbered /></Tool><Tool $w={25}><ListIcon /></Tool></Group>
            <Group $mr={4}><Tool $w={25}><IndentIcon out /></Tool><Tool $w={25}><IndentIcon /></Tool></Group>
            <Group $mr={3}>
              <Tool $w={25} $on><AlignIcon c="#777" d="M1 1h12M1 3.500h9M1 6h12M1 8.500h9M1 11h11" /></Tool>
              <Tool $w={25}><AlignIcon d="M1 1h12M3 3.500h8M1 6h12M3 8.500h8M2 11h10" /></Tool>
              <Tool $w={25}><AlignIcon d="M1 1h12M4 3.500h9M1 6h12M4 8.500h9M2 11h11" /></Tool>
            </Group>
            <Sep $mr={4} />
            <Group><Tool $w={25}><BubbleIcon /></Tool><Tool $w={26}><GlobeIcon /></Tool><Tool $w={25}><TreeIcon /></Tool><Tool $w={14}><Caret /></Tool></Group>
            <Group $mr={0}><Tool $w={34}><TableIcon /><Caret /></Tool></Group>
            <Spacer $w={91} />
            <Group $mr={3}><Tool $w={34}><ColumnsIcon /><Caret /></Tool></Group>
            <Sep $mr={4} />
            <Group $mr={4}><Tool $w={25}><ClockIcon /></Tool></Group>
            <Group $mr={3}><Tool $w={25} $on><PageAIcon /></Tool><Tool $w={25}><SkullIcon /></Tool><Tool $w={15}><Caret /></Tool></Group>
            <Group><Tool $w={24}><ReloadIcon /></Tool><Tool $w={15}><Caret /></Tool></Group>
          </Toolbar>
          <Main>
            <Doc>
              <Row $h={16}><Gutter $pr={7}><ScrolledMark><Bookmark /></ScrolledMark></Gutter><Bar /><Content><Heading $mt={-20}><Fit w={245}>2.5 Throttle Mechanism</Fit></Heading></Content></Row>
              <Row $h={285}>
                <Counters values={[0, 1, 1]} colors={[undefined, '#a32a36', '#1fb3b8']} />
                <Bar $c="#de5a5a" />
                <Content>
                  <Line><Fit w={87}><b>DP-438 - </b>SOS D</Fit><Fit w={358}>esign for in-dash mounting with conventional accelerator pedal applications.</Fit></Line>
                  <PedalDrawing />
                </Content>
              </Row>
              <Row $h={52}><Gutter $pt={24} $pr={7}><Bookmark /></Gutter><Bar /><Content><Heading $mt={15}><Fit w={247}>2.6 Steering Mechanism</Fit></Heading></Content></Row>
              <Row $h={19}>
                <Counters values={[0, 0, 1]} colors={[undefined, undefined, '#1fb3b8']} />
                <Bar $c="#ffcc00" />
                <Content><Line><b><Fit w={45.5}>DP-439 - </Fit></b><Fit w={342.5}>SOS Design Interface SOS to Steering Gear assembly and Rotary value.</Fit></Line></Content>
              </Row>
              <Row $h={52}><Gutter $pt={24} $pr={7}><Bookmark /></Gutter><Bar /><Content><Heading $mt={15}><Fit w={240}>2.7 Braking Mechanism</Fit></Heading></Content></Row>
              <Row $h={134}>
                <Counters values={[1, 0, 0]} colors={['#3b9a2b']} />
                <Bar $c="#45a53b" />
                <Content>
                  <Line><b><Fit w={45.5}>DP-440 - </Fit></b><Fit w={535}>The BLC will include a universal mount method that is adapted into a variety of supported manufacturers' spaces.</Fit></Line>
                  <WheelDrawing />
                </Content>
              </Row>
            </Doc>
            <Divider />
            <Panel>
              <PanelHead>
                <GroupIcon />
                <PanelTitle><Fit w={102}>All Approvals</Fit></PanelTitle>
                <HeadIcons><ReloadIcon s={18} c="#fff" w={1.7} /><GearIcon s={17} c="#fff" hole="#666" r={3.4} /><CloseIcon /></HeadIcons>
              </PanelHead>
              <Tabs><Tab $on><Fit w={63}>All Approvals</Fit></Tab><Tab><Fit w={63}>My Approvals</Fit></Tab></Tabs>
              <Stats>
                <Stat $w={82} $pl={10} $c="#35a01c"><Big $pl={15}>6</Big><StatLabel><Fit w={49}>Approved</Fit><Caret $s={3} $t={4} $c="#35a01c" /></StatLabel></Stat>
                <Stat $w={98} $pl={10} $c="#a32f30"><Big $pl={23}>2</Big><StatLabel><Fit w={64}>Disapproved</Fit><Caret $s={3} $t={4} $c="#a32f30" /></StatLabel></Stat>
                <Side>
                  <SideRow $h={25} $c="#18bcc0"><SideNum>1</SideNum><Fit w={31}>Waiting</Fit><Caret $t={3} $c="#18bcc0" /></SideRow>
                  <SideRow $h={38} $c="#858585"><SideNum>0</SideNum><Fit w={52}>Outstanding</Fit><Caret $t={3} $c="#858585" /></SideRow>
                </Side>
              </Stats>
              <Invite><InviteIcon /><Fit w={100}>Invite for Approval...</Fit></Invite>
              <ItemLine><Fit w={36}>DP-439</Fit></ItemLine>
              <AddButton><Fit w={79}>Add Comment</Fit><CommentIcon /></AddButton>
              <People>
                <Person><PersonLabel $c="#2e9a1b"><Fit w={67}>Approved by:</Fit></PersonLabel><PersonValue $none><Fit w={25}>none</Fit></PersonValue><Remove /></Person>
                <Person><PersonLabel $c="#9a2a30"><Fit w={82}>Disapproved by:</Fit></PersonLabel><PersonValue $none><Fit w={25}>none</Fit></PersonValue><Remove /></Person>
                <Person><PersonLabel $c="#18b4bb"><Fit w={56.5}>Waiting for:</Fit></PersonLabel><PersonValue><Fit w={73}>Robert Project</Fit></PersonValue></Person>
              </People>
            </Panel>
          </Main>
        </Body>
      </Editor>
      <Tip><Fit w={157}>Mechanical Requirement: DP-439</Fit></Tip>
      <Annotations />
    </Page>
  );
}
